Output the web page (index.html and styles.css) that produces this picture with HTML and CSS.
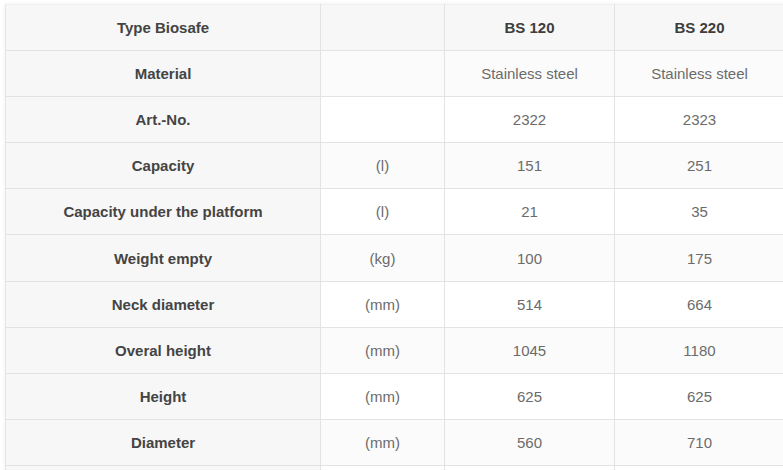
FILE: index.html
```html
<!DOCTYPE html>
<html>
<head>
<meta charset="utf-8">
<link rel="stylesheet" href="styles.css">
</head>
<body>
<div class="wrap">
<table class="spec">
  <colgroup>
    <col class="c1"><col class="c2"><col class="c3"><col class="c4">
  </colgroup>
  <tr class="head">
    <th>Type Biosafe</th><td></td><th class="model">BS 120</th><th class="model">BS 220</th>
  </tr>
  <tr class="alt">
    <th>Material</th><td></td><td>Stainless steel</td><td>Stainless steel</td>
  </tr>
  <tr>
    <th>Art.-No.</th><td></td><td>2322</td><td>2323</td>
  </tr>
  <tr class="alt">
    <th>Capacity</th><td>(l)</td><td>151</td><td>251</td>
  </tr>
  <tr>
    <th>Capacity under the platform</th><td>(l)</td><td>21</td><td>35</td>
  </tr>
  <tr class="alt">
    <th>Weight empty</th><td>(kg)</td><td>100</td><td>175</td>
  </tr>
  <tr>
    <th>Neck diameter</th><td>(mm)</td><td>514</td><td>664</td>
  </tr>
  <tr class="alt">
    <th>Overal height</th><td>(mm)</td><td>1045</td><td>1180</td>
  </tr>
  <tr>
    <th>Height</th><td>(mm)</td><td>625</td><td>625</td>
  </tr>
  <tr class="alt">
    <th>Diameter</th><td>(mm)</td><td>560</td><td>710</td>
  </tr>
  <tr>
    <th></th><td></td><td></td><td></td>
  </tr>
</table>
</div>
</body>
</html>
```
FILE: styles.css
```css
html, body {
  margin: 0;
  padding: 0;
  background: #ffffff;
  overflow: hidden;
}
.wrap {
  padding: 4px 0 0 5px;
}
.spec {
  border-collapse: collapse;
  table-layout: fixed;
  width: 779px;
  font-family: "Liberation Sans", Arial, sans-serif;
  font-size: 15px;
  box-shadow: 0 0 4px rgba(0, 0, 0, 0.07);
}
.c1 { width: 315px; }
.c2 { width: 124px; }
.c3 { width: 170px; }
.c4 { width: 170px; }
.spec tr {
  height: 46.1px;
}
.spec th, .spec td {
  border: 1px solid #e3e3e3;
  text-align: center;
  vertical-align: middle;
  padding: 0 8px;
  color: #6b6b6b;
  font-weight: normal;
}
.spec th {
  color: #444444;
  font-weight: bold;
}
.spec tr > :first-child {
  background: #f7f7f7;
  border-left: 1px solid #e6e6e6;
}
.spec tr.alt > * {
  background: #fbfbfb;
}
.spec tr.alt > :first-child {
  background: #f7f7f7;
}
.spec tr.head > * {
  background: #f7f7f7;
  border-top: 1px solid #f0f0f0;
}
.spec th.model {
  color: #3d3d3d;
}
```
